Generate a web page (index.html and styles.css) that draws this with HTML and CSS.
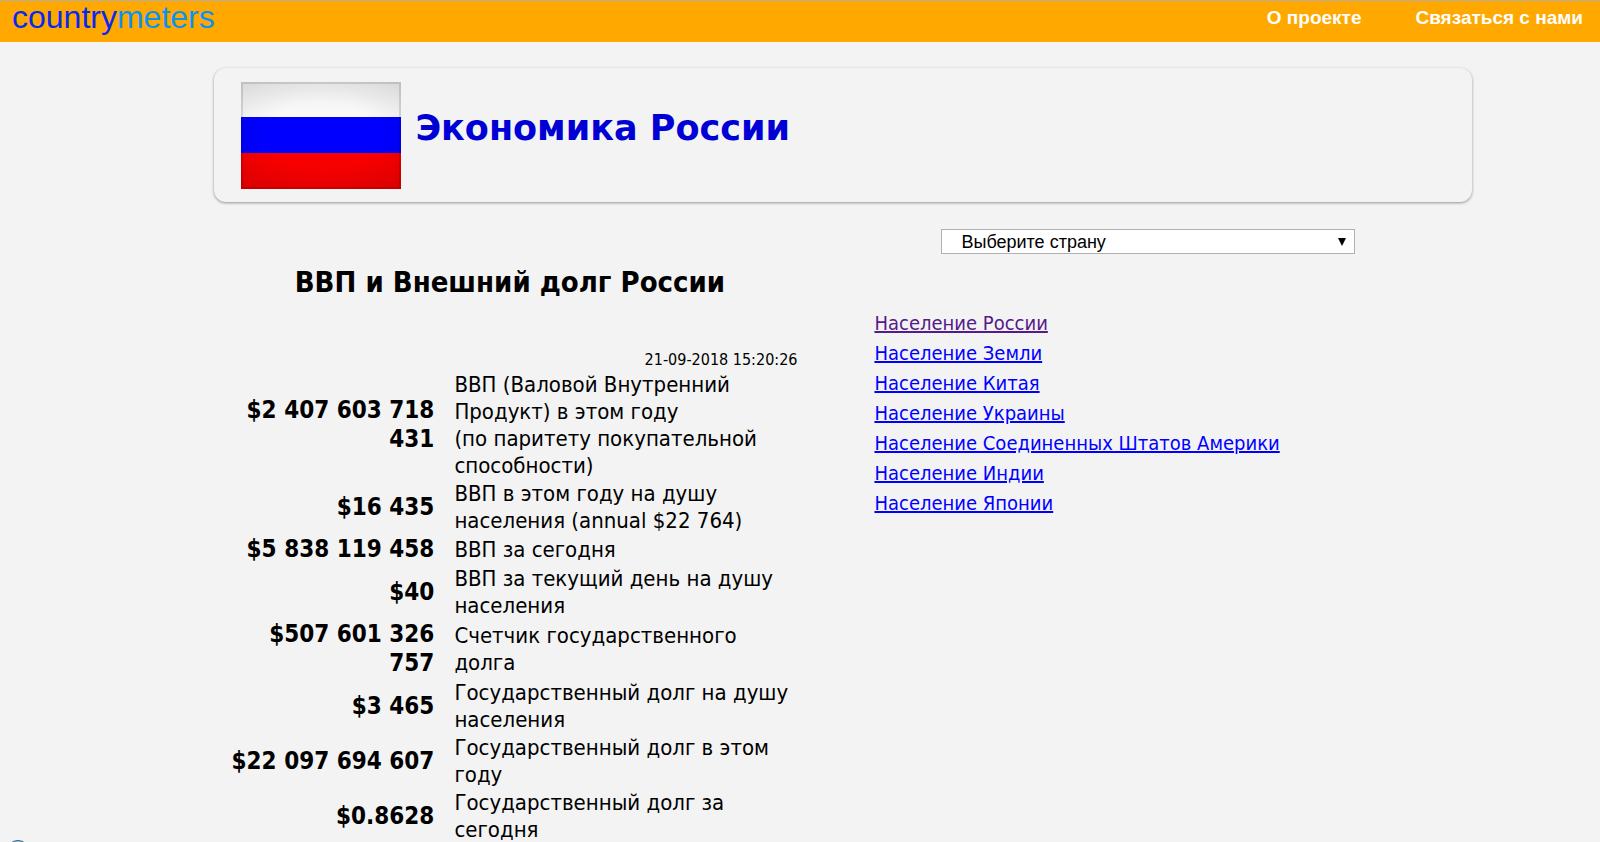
FILE: index.html
```html
<!DOCTYPE html>
<html lang="ru">
<head>
<meta charset="utf-8">
<title>Экономика России</title>
<link rel="stylesheet" href="styles.css">
</head>
<body>
<header class="topbar">
  <a class="logo" href="#">country<span class="logo-accent">meters</span></a>
  <nav class="topnav">
    <a href="#">О проекте</a>
    <a href="#">Связаться с нами</a>
  </nav>
</header>
<main class="page">
  <section class="banner">
    <svg class="flag" viewBox="0 0 160 107" role="img" aria-label="Флаг России">
      <defs>
        <radialGradient id="shade" cx="50%" cy="50%" r="65%">
          <stop offset="0.5" stop-color="#000" stop-opacity="0"/>
          <stop offset="1" stop-color="#000" stop-opacity="0.07"/>
        </radialGradient>
        <linearGradient id="top" x1="0" y1="0" x2="0" y2="1">
          <stop offset="0" stop-color="#ebebeb"/>
          <stop offset="1" stop-color="#fbfbfb"/>
        </linearGradient>
        <linearGradient id="bottom" x1="0" y1="0" x2="0" y2="1">
          <stop offset="0" stop-color="#fc0000"/>
          <stop offset="1" stop-color="#ec0000"/>
        </linearGradient>
      </defs>
      <rect width="160" height="35" fill="url(#top)"/>
      <rect y="35" width="160" height="36" fill="#00f"/>
      <rect y="71" width="160" height="36" fill="url(#bottom)"/>
      <rect width="160" height="107" fill="url(#shade)"/>
      <rect x="1" y="1" width="158" height="105" fill="none" stroke="#000" stroke-opacity="0.12" stroke-width="2"/>
    </svg>
    <h1 class="title">Экономика России</h1>
  </section>
  <div class="columns">
    <section class="stats">
      <h2 class="subtitle">ВВП и Внешний долг России</h2>
      <p class="clock">21-09-2018 15:20:26</p>
      <table class="counters">
        <tbody>
          <tr><th scope="row">$2 407 603 718 431</th><td>ВВП (Валовой Внутренний Продукт) в этом году<br>(по паритету покупательной способности)</td></tr>
          <tr><th scope="row">$16 435</th><td>ВВП в этом году на душу населения (annual $22 764)</td></tr>
          <tr><th scope="row">$5 838 119 458</th><td>ВВП за сегодня</td></tr>
          <tr><th scope="row">$40</th><td>ВВП за текущий день на душу населения</td></tr>
          <tr><th scope="row">$507 601 326 757</th><td>Счетчик государственного долга</td></tr>
          <tr><th scope="row">$3 465</th><td>Государственный долг на душу населения</td></tr>
          <tr><th scope="row">$22 097 694 607</th><td>Государственный долг в этом году</td></tr>
          <tr><th scope="row">$0.8628</th><td>Государственный долг за сегодня</td></tr>
        </tbody>
      </table>
    </section>
    <aside class="side">
      <select class="country" aria-label="Выберите страну"><option>Выберите страну</option></select>
      <ul class="links">
        <li><a class="visited" href="#">Население России</a></li>
        <li><a href="#">Население Земли</a></li>
        <li><a href="#">Население Китая</a></li>
        <li><a href="#">Население Украины</a></li>
        <li><a href="#">Население Соединенных Штатов Америки</a></li>
        <li><a href="#">Население Индии</a></li>
        <li><a href="#">Население Японии</a></li>
      </ul>
    </aside>
  </div>
</main>
<span class="badge"></span>
</body>
</html>
```
FILE: styles.css
```css
* { box-sizing: border-box; }
html { height: 100%; overflow: hidden; }
body {
  margin: 0;
  height: 100%;
  overflow: hidden;
  background: #f3f3f3;
  color: #000;
  font-family: "DejaVu Sans Condensed", "DejaVu Sans", sans-serif;
}
.topbar {
  display: flex;
  justify-content: space-between;
  height: 42px;
  padding: 0 17px 0 12px;
  background: #ffa800;
  border-top: 1px solid #b5aea0;
  font-family: "Liberation Sans", Arial, sans-serif;
}
.logo {
  font-size: 32px;
  line-height: 32px;
  color: #0a28f0;
  text-decoration: none;
}
.logo-accent { color: #0a93f5; }
.topnav { display: flex; gap: 54px; }
.topnav a {
  color: #fff;
  font-size: 19px;
  font-weight: bold;
  line-height: 34px;
  text-decoration: none;
}
.page { padding: 26px 8% 0 13.4%; }
.banner {
  display: flex;
  gap: 14px;
  min-height: 134px;
  padding: 14px 27px 13px;
  border-radius: 12px;
  box-shadow: 0 1px 3px rgba(0, 0, 0, 0.4);
}
.flag { width: 160px; height: 107px; }
.title {
  margin: 24px 0 0;
  font-family: "DejaVu Sans", sans-serif;
  font-size: 35px;
  line-height: 44px;
  color: #0000d4;
}
.columns {
  display: grid;
  grid-template-columns: 47% 1fr;
  column-gap: 69px;
}
.stats { padding: 60px 8px 0 0; }
.subtitle {
  margin: 0;
  padding-left: 8px;
  font-size: 29px;
  line-height: 40px;
  text-align: center;
}
.clock {
  margin: 47px 0 0;
  font-size: 16px;
  line-height: 22px;
  text-align: right;
}
.counters {
  width: 100%;
  table-layout: fixed;
  border-collapse: collapse;
}
.counters th {
  width: 220px;
  padding: 0 0 1px 12px;
  font-size: 24px;
  line-height: 29px;
  text-align: right;
  vertical-align: middle;
}
.counters td {
  padding: 0 0 1px 20px;
  font-size: 22px;
  line-height: 27px;
  vertical-align: middle;
}
.side { padding-top: 27px; }
.country {
  appearance: none;
  display: block;
  width: 414px;
  height: 25px;
  margin-left: 67px;
  padding: 0 19px;
  border: 1px solid #b0b0b0;
  border-radius: 0;
  background: #fff url("data:image/svg+xml,%3Csvg xmlns='http://www.w3.org/2000/svg' width='8' height='8'%3E%3Cpath d='M0 0h8L4 8z'/%3E%3C/svg%3E") no-repeat right 8px center;
  color: #000;
  font-family: "Liberation Sans", Arial, sans-serif;
  font-size: 18px;
}
.links {
  margin: 54px 0 0;
  padding: 0;
  list-style: none;
  font-size: 20px;
  line-height: 30px;
}
.links a { color: #00f; }
.links .visited { color: #551a8b; }
.badge {
  position: fixed;
  left: 6px;
  bottom: -22px;
  width: 24px;
  height: 24px;
  border: 1px solid #2d5f86;
  border-radius: 50%;
  background: #a9c9e0;
}
```
